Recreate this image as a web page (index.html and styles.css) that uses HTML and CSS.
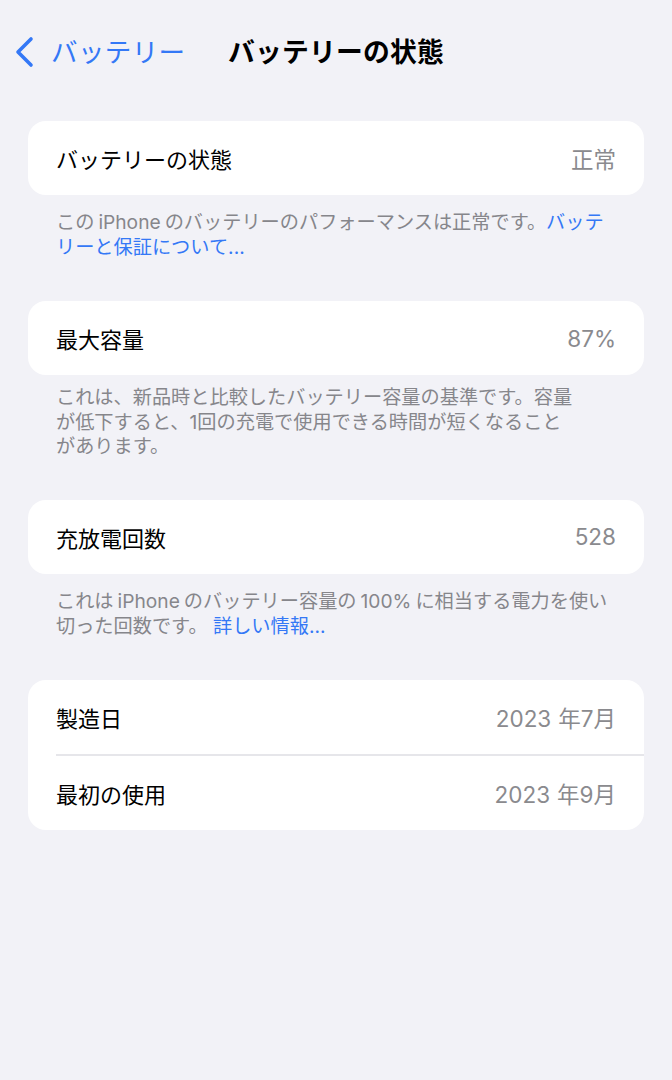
FILE: index.html
```html
<!DOCTYPE html>
<html lang="ja">
<head>
<meta charset="utf-8">
<title>バッテリーの状態</title>
<link rel="stylesheet" href="styles.css">
</head>
<body>
<header class="nav">
  <div class="nav-left">
    <a class="back">
      <svg class="chevron" viewBox="0 0 22 32" width="22" height="32" aria-hidden="true">
        <path d="M18 3 L5 16 L18 29" fill="none" stroke="#3478f6" stroke-width="3.6" stroke-linecap="round" stroke-linejoin="round"/>
      </svg>
      <span class="back-label">バッテリー</span>
    </a>
  </div>
  <h1 class="nav-title">バッテリーの状態</h1>
  <div class="nav-right"></div>
</header>

<main class="content">
  <section class="group">
    <div class="card">
      <div class="row"><span class="label">バッテリーの状態</span><span class="value">正常</span></div>
    </div>
    <p class="footer">この<span class="latin">iPhone</span>のバッテリーのパフォーマンスは正常です。<a class="link">バッテ<br>リーと保証について...</a></p>
  </section>

  <section class="group">
    <div class="card">
      <div class="row"><span class="label">最大容量</span><span class="value">87%</span></div>
    </div>
    <p class="footer footer-tight">これは、新品時と比較したバッテリー容量の基準です。容量<br>が低下すると、1回の充電で使用できる時間が短くなること<br>があります。</p>
  </section>

  <section class="group">
    <div class="card">
      <div class="row"><span class="label">充放電回数</span><span class="value">528</span></div>
    </div>
    <p class="footer">これは<span class="latin">iPhone</span>のバッテリー容量の<span class="latin">100%</span>に相当する電力を使い<br>切った回数です。 <a class="link">詳しい情報...</a></p>
  </section>

  <section class="group">
    <div class="card">
      <div class="row"><span class="label">製造日</span><span class="value">2023<span class="num-gap"></span>年7月</span></div>
      <div class="divider"></div>
      <div class="row"><span class="label">最初の使用</span><span class="value">2023<span class="num-gap"></span>年9月</span></div>
    </div>
  </section>
</main>
</body>
</html>
```

FILE: styles.css
```css
* {
  box-sizing: border-box;
}

html, body {
  margin: 0;
  padding: 0;
}

body {
  background: #f2f2f7;
  font-family: Inter, "Noto Sans CJK JP", sans-serif;
  color: #000;
  height: 1080px;
}

.nav {
  display: grid;
  grid-template-columns: 1fr auto 1fr;
  align-items: center;
  height: 60px;
  margin-top: 22px;
}

.nav-left {
  display: flex;
  align-items: center;
}

.back {
  display: flex;
  align-items: center;
  gap: 16px;
  padding-left: 13px;
  color: #3478f6;
  text-decoration: none;
}

.chevron {
  display: block;
}

.back-label {
  font-size: 26.5px;
  line-height: 32px;
  letter-spacing: 0.4px;
}

.nav-title {
  margin: 0;
  font-size: 26.8px;
  font-weight: 700;
  line-height: 32px;
  letter-spacing: 0.2px;
}

.content {
  padding: 39px 28px 0;
}

.card {
  background: #fff;
  border-radius: 18px;
  overflow: hidden;
}

.row {
  display: flex;
  align-items: center;
  justify-content: space-between;
  height: 74px;
  padding: 0 28px;
}

.label {
  font-size: 22px;
}

.value {
  font-size: 22.5px;
  color: #8a8a8e;
  white-space: nowrap;
}

.num-gap {
  display: inline-block;
  width: 7px;
}

.divider {
  height: 2px;
  margin-left: 28px;
  background: #e6e6ea;
}

.footer {
  margin: 0;
  padding: 15px 28px 41px;
  font-size: 19.2px;
  line-height: 25px;
  color: #86868b;
}

.footer-tight {
  padding-top: 10px;
  line-height: 24.5px;
}

.latin {
  margin: 0 4px;
}

.link {
  color: #3478f6;
  text-decoration: none;
}
```
